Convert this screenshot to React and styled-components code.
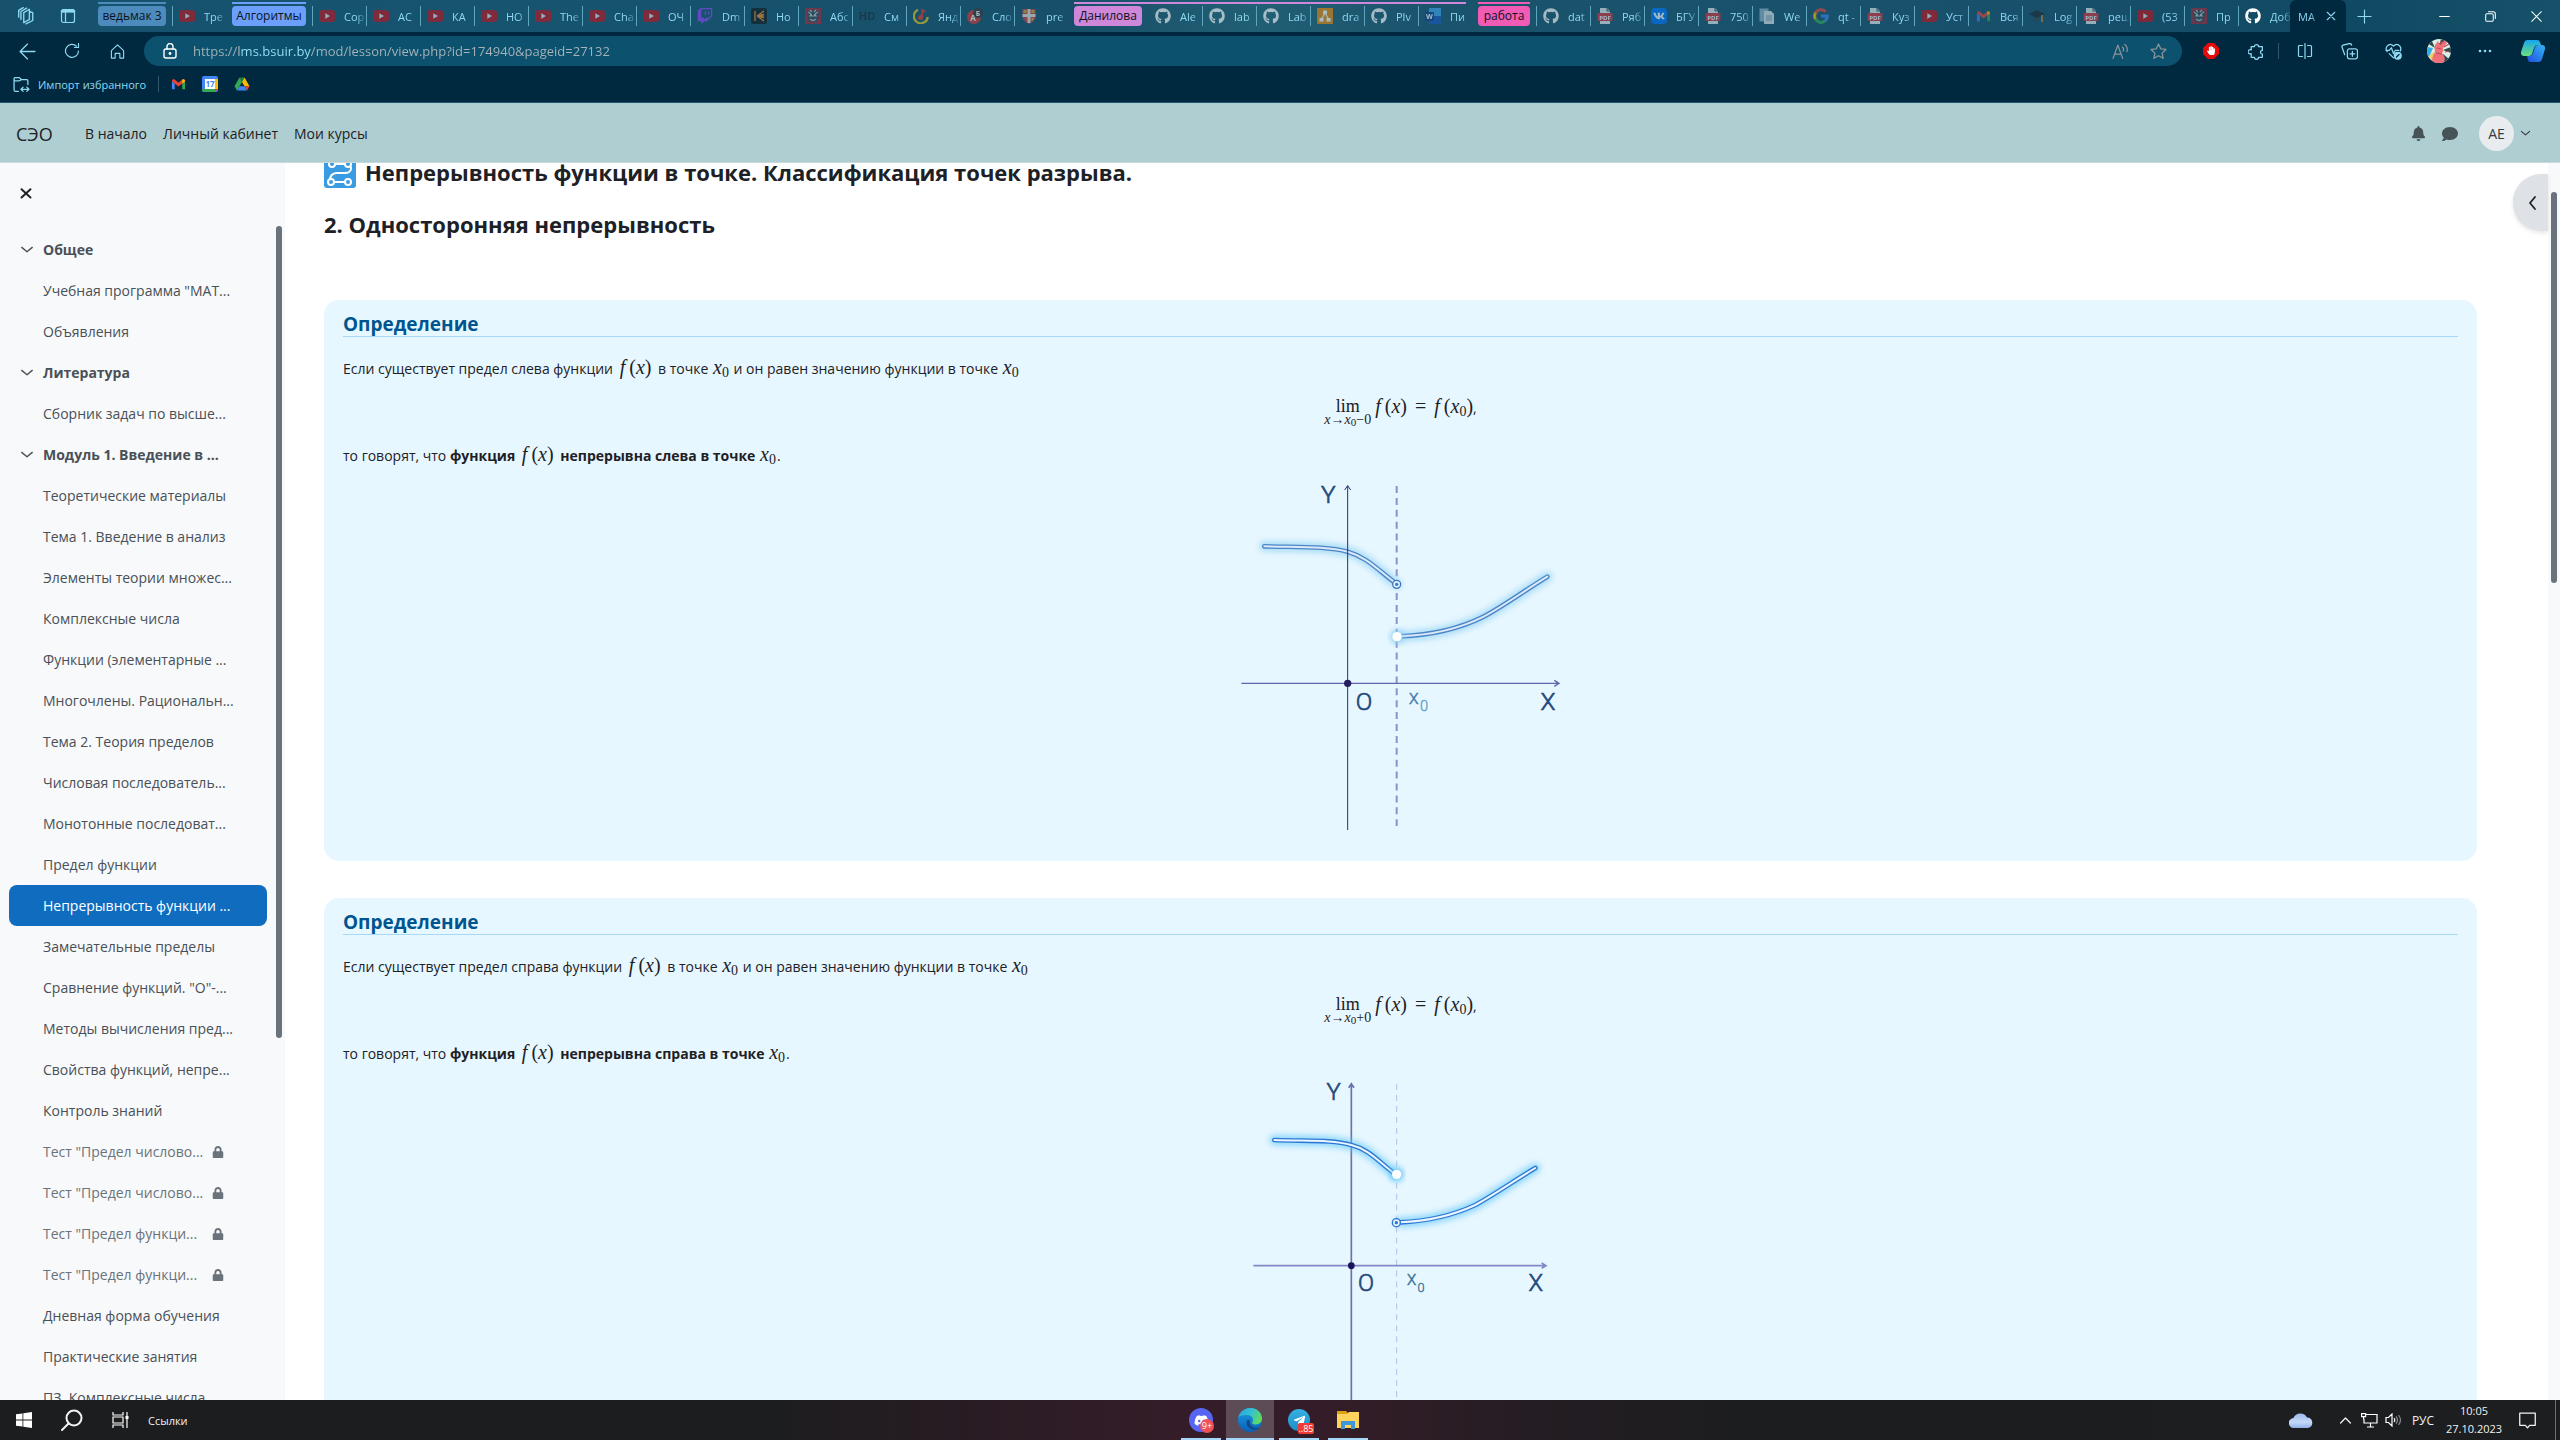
import React from "react";
import styled, { createGlobalStyle, css } from "styled-components";
import {
  FaGithub,
  FaTwitch,
  FaDiscord,
  FaTelegramPlane,
  FaBell,
  FaComment,
  FaLock,
  FaVk,
  FaHandPaper,
} from "react-icons/fa";

const ui = `"Open Sans", "Noto Sans", sans-serif`;
const math = `"Liberation Serif", serif`;
const ice = "#8fd9f2";

const Global = createGlobalStyle`
  * { box-sizing: border-box; }
  html, body { margin: 0; height: 100%; }
  body { font-family: ${ui}; font-size: 14px; color: #1d2125; background: #fff; overflow: hidden; }
  button { font: inherit; color: inherit; background: none; border: 0; padding: 0; margin: 0; }
  a { color: inherit; text-decoration: none; }
  ul { list-style: none; margin: 0; padding: 0; }
  h1, h2, h3, p { margin: 0; }
  svg { display: block; flex: none; }
`;

const Screen = styled.div`
  display: flex;
  flex-direction: column;
  height: 100vh;
`;

/* ---------- browser chrome ---------- */

const TabStrip = styled.div`
  display: flex;
  height: 32px;
  flex: none;
  color: ${ice};
  background: linear-gradient(90deg, #17526d 0%, #16546f 20%, #174f69 42%, #215f74 49%, #1a536c 56%, #18506b 80%, #104962 92%, #15526a 100%);
  font-size: 12px;
`;

const StripTools = styled.div`
  display: flex;
  align-items: center;
  width: 92px;
  padding-left: 16px;
  gap: 22px;
`;

const IconButton = styled.button`
  display: flex;
  align-items: center;
  justify-content: center;
  flex: none;
  width: ${(p) => p.$w || 20}px;
  height: ${(p) => p.$h || 24}px;
  color: ${(p) => p.$color || ice};
`;

const Group = styled.div`
  position: relative;
  display: flex;
  &::before {
    content: "";
    position: absolute;
    top: 2px;
    left: 6px;
    right: 6px;
    height: 2px;
    background: ${(p) => p.$color};
  }
`;

const GroupLabel = styled.button`
  width: ${(p) => p.$w}px;
  height: 20px;
  margin: 6px 6px 0;
  border-radius: 4px;
  background: ${(p) => p.$color};
  color: #0a1420;
  line-height: 20px;
  text-align: center;
`;

const Tab = styled.button`
  display: flex;
  align-items: center;
  width: 54px;
  flex: none;
  height: 32px;
  gap: 9px;
  padding-left: 7px;
  background: linear-gradient(#5fa6bd, #5fa6bd) left 6px / ${(p) => (p.$first ? 0 : 1)}px 20px no-repeat;
`;

const Favicon = styled.span`
  display: flex;
  align-items: center;
  justify-content: center;
  width: 16px;
  height: 16px;
  flex: none;
  opacity: ${(p) => (p.$bright ? 1 : 0.6)};
`;

const TabText = styled.span`
  width: 22px;
  white-space: nowrap;
  font-size: 11px;
  text-align: left;
  mask-image: linear-gradient(90deg, #000 55%, transparent);
`;

const ActiveTab = styled.div`
  display: flex;
  align-items: center;
  width: 56px;
  margin-left: -2px;
  padding: 0 10px 0 8px;
  justify-content: space-between;
  background: #00293f;
  border-radius: 6px 6px 0 0;
`;

const WindowButtons = styled.div`
  display: flex;
  flex: 1;
  align-items: center;
  justify-content: flex-end;
  padding: 0 14px 0 8px;
  gap: 26px;
`;

const Grow = styled.div`
  flex: 1;
`;

const Toolbar = styled.div`
  display: flex;
  align-items: center;
  height: 38px;
  flex: none;
  padding: 0 9px 0 17px;
  background: #00293f;
`;

const ToolGroup = styled.div`
  display: flex;
  align-items: center;
  width: 127px;
  gap: 25px;
`;

const AddressBar = styled.form`
  display: flex;
  flex: 1;
  align-items: center;
  height: 30px;
  padding: 0 14px 0 17px;
  gap: 14px;
  border-radius: 15px;
  background: #0c526f;
`;

const Url = styled.input`
  flex: 1;
  height: 30px;
  padding: 0;
  border: 0;
  outline: 0;
  font: 13px ${ui};
  color: transparent;
  background: linear-gradient(90deg, #a9b4b9 46px, #9be3f8 46px, #9be3f8 118px, #a9b4b9 118px);
  background-clip: text;
  -webkit-background-clip: text;
`;

const Extensions = styled.div`
  display: flex;
  align-items: center;
  padding-left: ${(p) => (p.$near ? 19 : 16)}px;
  gap: ${(p) => (p.$near ? 13 : 20)}px;
`;

const Divider = styled.span`
  width: 1px;
  height: 16px;
  background: #33576a;
`;

const Bookmarks = styled.div`
  display: flex;
  align-items: center;
  height: 33px;
  flex: none;
  padding: 0 13px 4px;
  gap: 12px;
  color: ${ice};
  background: #00293f;
  border-bottom: 1px solid #22566d;
  font-size: 11px;
`;

const Bookmark = styled.a`
  display: flex;
  align-items: center;
  gap: 8px;
  padding-right: ${(p) => p.$pad || 0}px;
`;

const Avatar = styled.span`
  display: block;
  width: 24px;
  height: 24px;
  border-radius: 50%;
  overflow: hidden;
`;

/* ---------- site header ---------- */

const SiteHeader = styled.header`
  display: flex;
  align-items: center;
  height: 60px;
  flex: none;
  padding: 2px 29px 0 16px;
  background: #aeced2;
  border-bottom: 1px solid #c8dadd;
`;

const Brand = styled.a`
  width: 69px;
  font-size: 18px;
`;

const SiteNav = styled.nav`
  display: flex;
  flex: 1;
  gap: 16px;
`;

const UserTools = styled.div`
  display: flex;
  align-items: center;
  color: #475457;
  gap: 16px;
`;

const Initials = styled.button`
  display: flex;
  align-items: center;
  gap: 6px;
  margin-left: 5px;
  color: #343a40;
  span {
    display: flex;
    align-items: center;
    justify-content: center;
    width: 35px;
    height: 35px;
    border-radius: 50%;
    background: #e9ecef;
  }
`;

/* ---------- page ---------- */

const Page = styled.div`
  position: relative;
  display: flex;
  flex: 1;
  min-height: 0;
  overflow: hidden;
`;

const Sidebar = styled.aside`
  display: flex;
  flex-direction: column;
  width: 285px;
  flex: none;
  background: #f8f9fa;
`;

const SidebarHead = styled.div`
  height: 63px;
  flex: none;
  padding: 23px 16px 0;
`;

const SidebarBody = styled.div`
  display: flex;
  flex: 1;
  min-height: 0;
  overflow: hidden;
`;

const Index = styled.ul`
  width: 258px;
  margin: 3px 9px 0;
  flex: none;
`;

const Row = styled.li`
  display: flex;
  align-items: center;
  height: 41px;
  border-radius: 8px;
  white-space: nowrap;
  color: #495057;
  ${(p) => p.$kind === "section" && css`font-weight: 700;`}
  ${(p) => p.$kind === "locked" && css`color: #6a737b;`}
  ${(p) => p.$kind === "active" && css`color: #fff; background: #0f6cbf;`}
`;

const RowSlot = styled.span`
  width: 34px;
  padding-left: 11px;
  flex: none;
`;

const RowLink = styled.a`
  width: ${(p) => (p.$short ? "169px" : "auto")};
`;

const Thumb = styled.span`
  width: 6px;
  height: ${(p) => p.$h};
  border-radius: 3px;
  background: #6a737b;
`;

const Main = styled.main`
  flex: 1;
  min-width: 0;
  padding: 0 71px 0 39px;
`;

const PageTitle = styled.h1`
  display: flex;
  align-items: center;
  gap: 9px;
  margin-top: -7px;
  font-size: 22px;
  line-height: 32px;
`;

const Subtitle = styled.h2`
  margin: 20px 0 60px;
  font-size: 22px;
  line-height: 32px;
`;

const Card = styled.section`
  margin-bottom: 37px;
  padding: 11px 19px 27px;
  border-radius: 15px;
  background: #e7f7ff;
`;

const CardTitle = styled.h3`
  height: 26px;
  margin-bottom: 20px;
  border-bottom: 1px solid #a6d8f8;
  color: #00548f;
  font-size: 19px;
  line-height: 26px;
`;

const Text = styled.p`
  height: 22px;
  line-height: 22px;
  white-space: nowrap;
`;

const Formula = styled.div`
  display: flex;
  justify-content: center;
  height: 65px;
  padding-top: 15px;
  line-height: 24px;
`;

const Limit = styled.span`
  display: flex;
  flex-direction: column;
  align-items: center;
  margin-right: 4px;
  font-family: ${math};
  font-size: 18px;
  small {
    font-size: 14px;
    line-height: 12px;
    margin-top: -4px;
    white-space: nowrap;
  }
  sub {
    font-size: 11px;
    line-height: 8px;
    vertical-align: -2px;
  }
`;

const Fn = styled.span`
  margin: 0 ${(p) => p.$gap || 0}px;
  font-family: ${math};
  font-size: 20px;
  line-height: 20px;
  font-weight: 400;
  white-space: nowrap;
  sub {
    font-size: 14px;
    line-height: 10px;
    vertical-align: -3px;
  }
`;

const F = styled.i`
  margin-right: 4px;
`;

const Equals = styled.span`
  margin: 0 8px;
  font-family: ${math};
  font-size: 20px;
`;

const Chart = styled.svg`
  width: 400px;
  height: 354px;
  margin: 14px auto 0;
`;

const PageScroll = styled.div`
  display: flex;
  justify-content: center;
  width: 12px;
  flex: none;
  padding-top: 29px;
  background: #f8f9fa;
`;

const DrawerToggle = styled.button`
  position: absolute;
  top: 11px;
  right: 12px;
  display: flex;
  align-items: center;
  justify-content: center;
  width: 35px;
  height: 57px;
  padding-left: 4px;
  border-radius: 28px 0 0 28px;
  background: #dee2e6;
  box-shadow: 0 2px 4px rgba(0, 0, 0, 0.1);
`;

/* ---------- taskbar ---------- */

const Taskbar = styled.footer`
  display: grid;
  grid-template-columns: 1fr auto 1fr;
  height: 40px;
  flex: none;
  color: #f2f2f2;
  font-size: 12px;
  background: linear-gradient(90deg, #1c1d1f 0%, #1c1d1f 30%, #2c1c25 40%, #341d28 46%, #341d28 52%, #241d23 60%, #1c1d1f 68%, #1c1e20 100%);
`;

const TaskLeft = styled.div`
  display: flex;
  align-items: center;
  a {
    margin-left: 4px;
    font-size: 11px;
  }
`;

const TaskApps = styled.div`
  display: flex;
  gap: 1px;
  margin-right: 11px;
`;

const TaskApp = styled.button`
  position: relative;
  display: flex;
  align-items: center;
  justify-content: center;
  width: 48px;
  height: 40px;
  background: ${(p) => (p.$active ? "#5d4b55" : "transparent")};
  &::after {
    content: "";
    position: absolute;
    bottom: 0;
    left: ${(p) => (p.$active ? 0 : 4)}px;
    right: ${(p) => (p.$active ? 0 : 4)}px;
    height: 2px;
    background: #a5d8f8;
  }
`;

const Badge = styled.span`
  position: absolute;
  left: 23px;
  top: ${(p) => (p.$round ? 19 : 23)}px;
  min-width: ${(p) => (p.$round ? 14 : 16)}px;
  height: ${(p) => (p.$round ? 14 : 11)}px;
  line-height: ${(p) => (p.$round ? 14 : 11)}px;
  border-radius: ${(p) => (p.$round ? 7 : 2)}px;
  background: ${(p) => (p.$round ? "#ee5256" : "#f03a35")};
  color: #fff;
  font-size: 9px;
  text-align: center;
`;

const Disc = styled.span`
  display: flex;
  align-items: center;
  justify-content: center;
  width: ${(p) => p.$size}px;
  height: ${(p) => p.$size}px;
  border-radius: 50%;
  color: #fff;
  background: ${(p) => p.$bg};
`;

const Tray = styled.div`
  display: flex;
  align-items: center;
  justify-content: flex-end;
`;

const TaskButton = styled.button`
  display: flex;
  align-items: center;
  justify-content: center;
  width: ${(p) => (p.$wide ? 48 : 24)}px;
  height: 40px;
  margin-right: ${(p) => p.$gap || 0}px;
`;

const Language = styled.button`
  width: 36px;
`;

const Clock = styled.time`
  display: block;
  width: 66px;
  margin-right: 8px;
  text-align: center;
  font-size: 11px;
  line-height: 18px;
`;

const ShowDesktop = styled.span`
  width: 1px;
  height: 40px;
  margin: 0 4px 0 16px;
  background: #6e6f71;
`;

/* ---------- icons ---------- */

function Line({ s = 16, w = 1.2, children, box = 16 }) {
  return (
    <svg width={s} height={s} viewBox={`0 0 ${box} ${box}`} fill="none" stroke="currentColor" strokeWidth={w} strokeLinecap="round" strokeLinejoin="round">
      {children}
    </svg>
  );
}

const Pdf = () => (
  <svg width="16" height="16" viewBox="0 0 16 16">
    <path d="M3 0h7l3 3v13H3z" fill="#e8eef0" />
    <path d="M10 0v3h3" fill="none" stroke="#33424a" />
    <rect x="0.500" y="5" width="15" height="8" rx="1" fill="#d8343a" />
    <text x="8" y="11.500" fontSize="6" fontWeight="700" fontFamily="Open Sans" fill="#fff" textAnchor="middle">PDF</text>
  </svg>
);

const YouTube = () => (
  <svg width="16" height="16" viewBox="0 0 16 16">
    <rect y="2" width="16" height="12" rx="3" fill="#c4121c" />
    <path d="M6.300 5.300v5.400L11 8z" fill="#e8e8e8" />
  </svg>
);

const Gmail = () => (
  <svg width="15" height="15" viewBox="0 0 16 16">
    <path d="M1 13V4.500l3 2.300V13z" fill="#4285f4" />
    <path d="M12 13V6.800l3-2.300V13z" fill="#34a853" />
    <path d="M1 4.500C1 2.600 3 2 4.200 3L8 6l3.800-3C13 2 15 2.600 15 4.500L8 10z" fill="#ea4335" />
    <path d="M12 2.900v4L15 4.700C15 2.600 13 2 12 2.900z" fill="#fbbc04" />
  </svg>
);

const Drive = () => (
  <svg width="16" height="16" viewBox="0 0 16 16">
    <path d="M5.500 1.500h5L8 6z" fill="#188038" />
    <path d="M5.500 1.500L0.500 10.300 3 14.500 8 6z" fill="#34a853" />
    <path d="M10.500 1.500l5 8.800h-5L8 6z" fill="#fbbc04" />
    <path d="M15.500 10.300L13 14.500 10.500 10.300z" fill="#ea4335" />
    <path d="M5.500 10.300h5l2.500 4.200H3z" fill="#4285f4" />
  </svg>
);

const Calendar = () => (
  <svg width="16" height="16" viewBox="0 0 16 16">
    <rect width="16" height="16" rx="2" fill="#4285f4" />
    <path d="M13 3H16v10h-3z" fill="#fbbc04" />
    <path d="M0 13h13V16H2a2 2 0 0 1-2-2z" fill="#34a853" />
    <path d="M13 13H16L13 16z" fill="#ea4335" />
    <rect x="3" y="3" width="10" height="10" fill="#fff" />
    <text x="8" y="11" fontSize="8" fontWeight="700" fontFamily="Open Sans" fill="#4285f4" textAnchor="middle">17</text>
  </svg>
);

const Ornament = () => (
  <svg width="16" height="16" viewBox="0 0 16 16">
    <rect width="16" height="16" fill="#a52a3c" />
    <path d="M2 5c2-4 10-4 12 0l-2 9H4z" fill="#3b4853" />
    <path d="M3 4l3 2M13 4l-3 2M4 8h8M5 11q3 3 6 0M5 2l2 2M11 2L9 4" stroke="#b7c4c8" strokeWidth="1.200" fill="none" />
    <circle cx="6" cy="7" r="1" fill="#e0e6e8" />
    <circle cx="10" cy="7" r="1" fill="#e0e6e8" />
  </svg>
);

const Hd = () => (
  <svg width="16" height="16" viewBox="0 0 16 16">
    <text x="8" y="12" fontSize="11" fontFamily="Open Sans" fontWeight="700" fill="#1c2c36" textAnchor="middle">HD</text>
  </svg>
);

const Rays = () => (
  <svg width="16" height="16" viewBox="0 0 16 16">
    <rect width="16" height="16" rx="2" fill="#151a1e" />
    <path d="M4 3v10M6 8l7-5M6 8l7-2M6 8h7M6 8l7 2M6 8l7 5" stroke="#f58a2a" strokeWidth="1.300" />
  </svg>
);

const Music = () => (
  <svg width="16" height="16" viewBox="0 0 16 16">
    <path d="M5 1.800A7 7 0 1 0 14.800 9" fill="none" stroke="#e8c81e" strokeWidth="2.200" />
    <circle cx="7.500" cy="9.500" r="2.500" fill="#e83a2a" />
    <path d="M9.300 9V2l3 2" fill="none" stroke="#e83a2a" strokeWidth="1.600" />
  </svg>
);

const Abc = () => (
  <svg width="16" height="16" viewBox="0 0 16 16">
    <circle cx="7" cy="9" r="7" fill="#d93a30" />
    <circle cx="11" cy="5" r="5" fill="#3b3538" />
    <text x="6" y="13" fontSize="8" fontWeight="700" fontFamily="Open Sans" fill="#fff" textAnchor="middle">A</text>
    <text x="11" y="8" fontSize="7" fontWeight="700" fontFamily="Open Sans" fill="#fff" textAnchor="middle">Б</text>
  </svg>
);

const Shield = () => (
  <svg width="16" height="16" viewBox="0 0 16 16">
    <path d="M1.500 1h13v8q-1 5-6.500 7Q2.500 14 1.500 9z" fill="#c8434a" />
    <path d="M6.500 1h3v14h-3zM1.500 6h13v3h-13z" fill="#f0e6d8" />
    <path d="M2.500 2h3v3h-3zM10.500 10h3l-2 3h-1zM10.500 2h3v3h-3z" fill="#d9a92c" />
  </svg>
);

const Diagram = () => (
  <svg width="16" height="16" viewBox="0 0 16 16">
    <rect width="16" height="16" rx="1" fill="#f08705" />
    <path d="M8 5L4.500 11M8 5l3.500 6" stroke="#fff" strokeWidth="1.200" />
    <path d="M6 2.500h4v3.500H6zM2.500 10h4v3.500h-4zM9.500 10h4v3.500h-4z" fill="#fff" />
  </svg>
);

const Word = () => (
  <svg width="16" height="16" viewBox="0 0 16 16">
    <rect x="4" y="0" width="12" height="16" rx="1" fill="#41a5ee" />
    <rect x="4" y="8" width="12" height="8" rx="1" fill="#185abd" />
    <rect x="0" y="4" width="9" height="9" rx="1" fill="#103f91" />
    <text x="4.500" y="11" fontSize="7" fontWeight="700" fontFamily="Open Sans" fill="#fff" textAnchor="middle">W</text>
  </svg>
);

const Vk = () => (
  <svg width="16" height="16" viewBox="0 0 16 16">
    <rect width="16" height="16" rx="4" fill="#0077ff" />
    <FaVk x="2" y="2" size={12} color="#fff" />
  </svg>
);

const Papers = () => (
  <svg width="16" height="16" viewBox="0 0 16 16">
    <path d="M0.500 0.500h9v13h-9z" fill="#8fb4c8" />
    <path d="M5 3h7l3 3v10H5z" fill="#dfe8ec" />
    <path d="M7 8h6M7 10h6M7 12h6" stroke="#7a9eb2" />
  </svg>
);

const Google = () => (
  <svg width="16" height="16" viewBox="0 0 16 16" fill="none" strokeWidth="3">
    <path d="M12.800 3.800A6.300 6.300 0 0 0 2.500 5" stroke="#ea4335" />
    <path d="M2.600 4.700a6.300 6.300 0 0 0 0 6.600" stroke="#fbbc05" />
    <path d="M2.500 11a6.300 6.300 0 0 0 9.500 2" stroke="#34a853" />
    <path d="M11.800 13A6.300 6.300 0 0 0 14.300 8H8" stroke="#4285f4" />
  </svg>
);

const Cap = () => (
  <svg width="16" height="16" viewBox="0 0 16 16">
    <path d="M0 6l8-4 8 4-8 4z" fill="#1d2b33" />
    <path d="M4 9v3q4 2.500 8 0V9l-4 2z" fill="#31434c" />
    <path d="M13 7v7" stroke="#e0952f" strokeWidth="1.500" />
  </svg>
);

const favicons = {
  yt: YouTube,
  tw: () => <FaTwitch size={16} color="#9146ff" />,
  rays: Rays,
  orn: Ornament,
  hd: Hd,
  music: Music,
  abc: Abc,
  shield: Shield,
  gh: () => <FaGithub size={16} color="#fff" />,
  draw: Diagram,
  word: Word,
  pdf: Pdf,
  vk: Vk,
  doc: Papers,
  google: Google,
  gmail: Gmail,
  cap: Cap,
};

const Chevron = ({ s = 14 }) => (
  <Line s={s} w={1.6}><path d="M2 5l6 5 6-5" /></Line>
);

const EdgeLogo = () => (
  <svg width="24" height="24" viewBox="0 0 24 24">
    <defs>
      <linearGradient id="edgeTop" x1="0" x2="1" y1="0.200" y2="0.600">
        <stop offset="0" stopColor="#2aa5e0" />
        <stop offset="0.500" stopColor="#35c1d0" />
        <stop offset="1" stopColor="#62dc5a" />
      </linearGradient>
      <linearGradient id="edgeLow" x1="0" x2="0" y1="0" y2="1">
        <stop offset="0" stopColor="#1a9fe0" />
        <stop offset="1" stopColor="#0b5fb8" />
      </linearGradient>
    </defs>
    <circle cx="12" cy="12" r="12" fill="url(#edgeLow)" />
    <path d="M0.300 9.500C2 3.500 7 0 12.500 0 19 0 24 5 24 10.300c0 4-3 6.200-6 6.200-2.500 0-4-0.800-4-1.800 0-0.700 1-1 1-2.900C15 9 12 7 8.500 7 4.500 7 1.300 8.300 0.300 9.500z" fill="url(#edgeTop)" />
    <path d="M8.500 14c0 5 4.500 8.500 10 7.700 1.500-0.300 3-1.200 4-2.700-2 1-4.500 1.200-6.500 0.500-3-1-4.500-3.500-4.300-6C12 11.500 9 10.500 8.500 14z" fill="#114a8b" />
  </svg>
);

const Copilot = () => (
  <svg width="24" height="22" viewBox="0 0 24 22">
    <defs>
      <linearGradient id="copA" x1="0" x2="0" y1="0" y2="1">
        <stop offset="0" stopColor="#16a5f2" />
        <stop offset="1" stopColor="#6ee07a" />
      </linearGradient>
      <linearGradient id="copB" x1="0" x2="1" y1="1" y2="0">
        <stop offset="0" stopColor="#1f4fe0" />
        <stop offset="1" stopColor="#35b4f5" />
      </linearGradient>
    </defs>
    <path d="M6 0h10q2.500 0 3 2l1 3h-4q-2 0-3 3l-2 6q-1 2-3 2H3q-3.500 0-3-4L3 3Q4 0 6 0z" fill="url(#copA)" />
    <path d="M18 22H9q-1.500 0-2-2l-1-4h3q2 0 3-3l2-6q1-2 3-2h4q3.500 0 3 4l-3 10q-1 3-3 3z" fill="url(#copB)" />
  </svg>
);

const FolderIcon = () => (
  <svg width="22" height="18" viewBox="0 0 22 18">
    <path d="M0 0h9l2 2v3H0z" fill="#e0a010" />
    <path d="M0 3h10l2-2h10v16H0z" fill="#ffd35c" />
    <path d="M4 18v-8h14v8h-4v-4H8v4z" fill="#3f97d8" />
  </svg>
);

const CloudIcon = () => (
  <svg width="24" height="16" viewBox="0 0 24 16">
    <defs>
      <linearGradient id="cloud" x1="0" x2="0" y1="0" y2="1">
        <stop offset="0" stopColor="#9db8ee" />
        <stop offset="0.600" stopColor="#c5daf8" />
        <stop offset="1" stopColor="#8fb0ea" />
      </linearGradient>
    </defs>
    <path d="M5 16a5 5 0 0 1-0.500-10A7.500 7.500 0 0 1 18 5.500a5.300 5.300 0 0 1 1 10.500z" fill="url(#cloud)" />
  </svg>
);

/* ---------- data ---------- */

const groupA = [
  ["yt", "Сор"], ["yt", "АС"], ["yt", "КА"], ["yt", "НО"], ["yt", "The"], ["yt", "Cha"], ["yt", "ОЧ"],
  ["tw", "Dm"], ["rays", "Но"], ["orn", "Абс"], ["hd", "См"], ["music", "Янд"], ["abc", "Сло"], ["shield", "pre"],
];
const groupB = [["gh", "Ale"], ["gh", "lab"], ["gh", "Lab"], ["draw", "dra"], ["gh", "Plv"], ["word", "Пи"]];
const groupC = [
  ["gh", "dat"], ["pdf", "Ряб"], ["vk", "БГУ"], ["pdf", "750"], ["doc", "We"], ["google", "qt -"], ["pdf", "Куз"],
  ["yt", "Уст"], ["gmail", "Вся"], ["cap", "Log"], ["pdf", "реш"], ["yt", "(53"], ["orn", "Пр"], ["gh", "Доб", true],
];

const index = [
  ["section", "Общее"],
  ["item", 'Учебная программа "МАТ...'],
  ["item", "Объявления"],
  ["section", "Литература"],
  ["item", "Сборник задач по высше..."],
  ["section", "Модуль 1. Введение в ..."],
  ["item", "Теоретические материалы"],
  ["item", "Тема 1. Введение в анализ"],
  ["item", "Элементы теории множес..."],
  ["item", "Комплексные числа"],
  ["item", "Функции (элементарные ..."],
  ["item", "Многочлены. Рациональн..."],
  ["item", "Тема 2. Теория пределов"],
  ["item", "Числовая последователь..."],
  ["item", "Монотонные последоват..."],
  ["item", "Предел функции"],
  ["active", "Непрерывность функции ..."],
  ["item", "Замечательные пределы"],
  ["item", 'Сравнение функций. "О"-...'],
  ["item", "Методы вычисления пред..."],
  ["item", "Свойства функций, непре..."],
  ["item", "Контроль знаний"],
  ["locked", 'Тест "Предел числово...'],
  ["locked", 'Тест "Предел числово...'],
  ["locked", 'Тест "Предел функци...'],
  ["locked", 'Тест "Предел функци...'],
  ["item", "Дневная форма обучения"],
  ["item", "Практические занятия"],
  ["item", "ПЗ. Комплексные числа"],
];

/* ---------- pieces ---------- */

const BrowserTab = ({ icon, text, bright, first }) => {
  const Icon = favicons[icon];
  return (
    <Tab $first={first}>
      <Favicon $bright={bright}><Icon /></Favicon>
      <TabText>{text}</TabText>
    </Tab>
  );
};

const Fx = ({ gap }) => (
  <Fn $gap={gap}><F>f</F>(<i>x</i>)</Fn>
);

const X0 = () => (
  <Fn $gap={1}><i>x</i><sub>0</sub></Fn>
);

function Glow({ id, d, stroke, glow, core }) {
  return (
    <g fill="none" strokeLinecap="round">
      <path d={d} stroke={glow} strokeWidth="30" filter={`url(#${id})`} opacity="0.700" />
      <path d={d} stroke={stroke} strokeWidth="14" />
      <path d={d} stroke={core} strokeWidth="6" />
    </g>
  );
}

function ClosedPoint({ x, y, color }) {
  return (
    <g>
      <circle cx={x} cy={y} r="12" fill="#e3f1fd" stroke={color} strokeWidth="4" />
      <circle cx={x} cy={y} r="5" fill={color} />
    </g>
  );
}

function OpenPoint({ x, y, glow, id }) {
  return (
    <g>
      <circle cx={x} cy={y} r="20" fill={glow} filter={`url(#${id})`} />
      <circle cx={x} cy={y} r="14" fill="#fff" />
    </g>
  );
}

function LeftChart() {
  const c = "#4b86c8";
  const g = "#8fd0f2";
  return (
    <Chart viewBox="2 300 1200 1062" fontFamily="Roboto, sans-serif" fontWeight="300">
      <defs>
        <filter id="blurL" x="-20%" y="-60%" width="140%" height="220%"><feGaussianBlur stdDeviation="9" /></filter>
      </defs>
      <path d="M589 318V1338" stroke="#8f8fcb" strokeWidth="6" strokeDasharray="21 14.700" />
      <Glow id="blurL" d="M192 499C290 502 380 498 442 515 500 531 535 572 589 612" stroke={c} glow={g} core="#dbe8f8" />
      <Glow id="blurL" d="M600 769C680 766 770 750 850 710 915 675 975 630 1041 590" stroke={c} glow={g} core="#dbe8f8" />
      <path d="M123 910H1076M1062 901l14 9-14 9" stroke="#6264ae" strokeWidth="4" fill="none" />
      <path d="M442 1350V317M433 330l9-13 9 13" stroke="#2b2f78" strokeWidth="3" fill="none" />
      <circle cx="442" cy="910" r="11" fill="#221f5c" />
      <ClosedPoint x="589" y="613" color="#3a78c0" />
      <OpenPoint x="590" y="770" glow={g} id="blurL" />
      <g fontSize="73" fill="#1f497d" stroke="#1f497d" strokeWidth="2" textAnchor="middle">
        <text x="384" y="369">Y</text>
        <text x="491" y="991">O</text>
        <text x="1043" y="991">X</text>
      </g>
      <text x="640" y="971" fontSize="62" fill="#3678ad" stroke="#3678ad" textAnchor="middle">x</text>
      <text x="671" y="994" fontSize="44" fill="#5b9cc6" stroke="#5b9cc6" textAnchor="middle">0</text>
    </Chart>
  );
}

function RightChart() {
  const c = "#2b78d2";
  const g = "#64c8fa";
  return (
    <Chart viewBox="2 294 1200 1062" fontFamily="Roboto, sans-serif" fontWeight="300">
      <defs>
        <filter id="blurR" x="-20%" y="-60%" width="140%" height="220%"><feGaussianBlur stdDeviation="9" /></filter>
      </defs>
      <path d="M589 312V1338" stroke="#b4bfe6" strokeWidth="3" strokeDasharray="18 14.900" />
      <path d="M159 857H1037M1024 849l13 8-13 8" stroke="#8387c8" strokeWidth="5" fill="none" />
      <path d="M453 1350V311M445 323l8-12 8 12" stroke="#6c70ae" strokeWidth="5" fill="none" />
      <Glow id="blurR" d="M222 480C315 484 395 478 453 495 507 508 538 548 584 582" stroke={c} glow={g} core="#eaf5ff" />
      <Glow id="blurR" d="M598 727C675 724 750 710 825 675 885 642 940 603 1005 564" stroke={c} glow={g} core="#eaf5ff" />
      <circle cx="453" cy="857" r="10" fill="#1a1360" />
      <OpenPoint x="589" y="583" glow={g} id="blurR" />
      <ClosedPoint x="588" y="728" color="#2b78d2" />
      <g fontSize="71" fill="#1f497d" stroke="#1f497d" strokeWidth="2" textAnchor="middle">
        <text x="400" y="360">Y</text>
        <text x="497" y="932">O</text>
        <text x="1006" y="932">X</text>
      </g>
      <g fill="#2f7096" stroke="#2f7096" textAnchor="middle">
        <text x="634" y="914" fontSize="60">x</text>
        <text x="662" y="936" fontSize="38">0</text>
      </g>
    </Chart>
  );
}

function Definition({ side, sign, children }) {
  return (
    <Card>
      <CardTitle>Определение</CardTitle>
      <Text>Если существует предел {side} функции <Fx gap={3} /> в точке <X0 /> и он равен значению функции в точке <X0 /></Text>
      <Formula>
        <Limit>lim<small><i>x</i>→<i>x</i><sub>0</sub>{sign}0</small></Limit>
        <span><Fx /><Equals>=</Equals><Fn><F>f</F>(<i>x</i><sub>0</sub>)</Fn>,</span>
      </Formula>
      <Text>то говорят, что <b>функция <Fx gap={3} /> непрерывна {side} в точке</b> <X0 />.</Text>
      {children}
    </Card>
  );
}

export default function App() {
  return (
    <Screen>
      <Global />
      <TabStrip>
        <StripTools>
          <IconButton aria-label="Рабочие области">
            <Line s={18}><path d="M6 5l5-3v9l-5 3zM3.500 11V4l5-3M1.500 9V3l4-2.500M11 4l3 1v7l-6 3" /></Line>
          </IconButton>
          <IconButton aria-label="Вертикальные вкладки">
            <Line s={16}><rect x="1.500" y="1.500" width="13" height="13" rx="2" /><path d="M1.500 4h13M5.500 4v10" /><path d="M2 3h12" strokeWidth="2.500" /></Line>
          </IconButton>
        </StripTools>
        <Group $color="#4e8bbd">
          <GroupLabel $w={68} $color="#4e8bbd">ведьмак 3</GroupLabel>
        </Group>
        <BrowserTab icon="yt" text="Тре" />
        <Group $color="#6c9ffc">
          <GroupLabel $w={74} $color="#6c9ffc">Алгоритмы</GroupLabel>
        </Group>
        {groupA.map(([icon, text], i) => <BrowserTab key={i} icon={icon} text={text} />)}
        <Group $color="#cf87da">
          <GroupLabel $w={68} $color="#cf87da">Данилова</GroupLabel>
          {groupB.map(([icon, text], i) => <BrowserTab key={i} icon={icon} text={text} first={i === 0} />)}
        </Group>
        <Group $color="#f05cb5">
          <GroupLabel $w={52} $color="#f05cb5">работа</GroupLabel>
        </Group>
        {groupC.map(([icon, text, bright], i) => <BrowserTab key={i} icon={icon} text={text} bright={bright} />)}
        <ActiveTab>
          <TabText>МА</TabText>
          <IconButton $w={10} aria-label="Закрыть вкладку"><Line s={10}><path d="M2 2l12 12M14 2L2 14" strokeWidth="1.800" /></Line></IconButton>
        </ActiveTab>
        <WindowButtons>
          <IconButton aria-label="Новая вкладка"><Line s={15}><path d="M8 1v14M1 8h14" /></Line></IconButton>
          <Grow />
          <IconButton $color="#fff" aria-label="Свернуть"><Line s={11}><path d="M1 8h14" strokeWidth="1.600" /></Line></IconButton>
          <IconButton $color="#fff" aria-label="Развернуть"><Line s={11} w={1.5}><rect x="1" y="4" width="11" height="11" rx="2" /><path d="M5 1h7q3 0 3 3v7" /></Line></IconButton>
          <IconButton $color="#fff" aria-label="Закрыть"><Line s={11} w={1.5}><path d="M1 1l14 14M15 1L1 15" /></Line></IconButton>
        </WindowButtons>
      </TabStrip>

      <Toolbar>
        <ToolGroup>
          <IconButton aria-label="Назад"><Line s={17}><path d="M15 8H1M8 1L1 8l7 7" /></Line></IconButton>
          <IconButton aria-label="Обновить"><Line s={16}><path d="M14.500 8A6.500 6.500 0 1 1 12.500 3.200M14.500 0.500v4h-4" /></Line></IconButton>
          <IconButton aria-label="Домой"><Line s={15}><path d="M1.500 7L8 1l6.500 6v8h-4v-5h-5v5h-4z" /></Line></IconButton>
        </ToolGroup>
        <AddressBar>
          <IconButton $w={18} $color="#fff" type="button" aria-label="Сведения о сайте">
            <Line s={16} w={1.4}><rect x="2" y="6" width="12" height="9" rx="2" /><path d="M5 6V3.500a3 3 0 0 1 6 0V6" /><circle cx="8" cy="10.500" r="0.700" /></Line>
          </IconButton>
          <Url aria-label="Адрес" defaultValue="https://lms.bsuir.by/mod/lesson/view.php?id=174940&pageid=27132" />
          <IconButton type="button" $color="#8d9598" $w={28} aria-label="Прочесть вслух"><Line s={17}><path d="M1 14.500L5.500 2 10 14.500M2.500 10.500h6M10 4q1.500 1.500 0.500 3.500M12 1.500q3.500 2.500 2 6.500" /></Line></IconButton>
          <IconButton type="button" $color="#8d9598" aria-label="В избранное"><Line s={17}><path d="M8 1l2.100 4.500 4.900 0.600-3.600 3.400 0.900 4.900L8 12l-4.300 2.400 0.900-4.900L1 6.100l4.900-0.600z" /></Line></IconButton>
        </AddressBar>
        <Extensions $near>
          <IconButton aria-label="Блокировщик">
            <svg width="16" height="16" viewBox="0 0 16 16"><path d="M5 0h6l5 5v6l-5 5H5l-5-5V5z" fill="#e60b0b" /><FaHandPaper x="3.500" y="3" size={9} color="#fff" /></svg>
          </IconButton>
          <IconButton $w={44} aria-label="Расширения"><Line s={17}><path d="M3 3.500h3a2 2 0 1 1 4 0h3.500v3.500a1.600 1.600 0 1 0 0 3.500v3H10a2 2 0 1 1-4 0H3v-3.500a2 2 0 1 1 0-3.500z" /></Line></IconButton>
        </Extensions>
        <Divider />
        <Extensions>
          <IconButton aria-label="Разделить экран"><Line s={16}><path d="M8 0.500v15M5.500 2.500H2.500q-1 0-1 1v9q0 1 1 1h3M10.500 2.500h3q1 0 1 1v9q0 1-1 1h-3" /></Line></IconButton>
          <IconButton $w={28} aria-label="Коллекции"><Line s={17}><rect x="6" y="5.500" width="9.500" height="9.500" rx="2" /><path d="M10.700 8v4.500M8.500 10.200H13M3.500 11L1 4q-0.500-1.500 1-2l6-1.500q1.500-0.300 2 1.500" /></Line></IconButton>
          <IconButton aria-label="Производительность"><Line s={17}><path d="M8 3q-3-3.500-6 0-2 3 0 5M8 3q3-3.500 6 0 1.500 2 0.500 4.500M1 7h3l2-2.500L8 10l1.500-3H13M4 10l4 4" /><circle cx="12" cy="12" r="3.200" fill="currentColor" /><path d="M10.800 13.200l2.400-2.400" stroke="#00293f" /></Line></IconButton>
          <IconButton $w={32} aria-label="Профиль">
            <Avatar>
              <svg width="24" height="24" viewBox="0 0 24 24">
                <rect width="24" height="24" fill="#d9efe6" />
                <path d="M0 4l8 5L4 0zM14 0l-2 8 8-6zM24 8l-8 3 8 3zM22 20l-6-5v9z" fill="#2c4a48" />
                <path d="M0 8l6 1-3 7-3 2z" fill="#35aee0" />
                <path d="M2 17l5-4 2 6-4 3z" fill="#f0cf58" />
                <path d="M5 24q0-7 3-11-1-4 0-7l3-4 2 4 5-5 2 3-4 5q1 3-1 5 4 4 2 10z" fill="#f0707a" />
                <path d="M12 5l5-3M10 9l4 1M9 14l6 1M18 13l4-1M17 8l5-3" stroke="#b84a58" strokeWidth="1.200" fill="none" />
              </svg>
            </Avatar>
          </IconButton>
          <IconButton aria-label="Меню"><svg width="14" height="4" viewBox="0 0 14 4" fill="currentColor"><circle cx="2" cy="2" r="1.300" /><circle cx="7" cy="2" r="1.300" /><circle cx="12" cy="2" r="1.300" /></svg></IconButton>
          <IconButton $w={36} aria-label="Copilot"><Copilot /></IconButton>
        </Extensions>
      </Toolbar>

      <Bookmarks>
        <Bookmark href="#">
          <Line s={17}><path d="M1 13V2.500q0-1 1-1h4l2 2h5q1 0 1 1V8M1 4.500h5l2-1M1 13q0 1.500 1.500 1.500H5M8 12.500h7M9.500 10.500l-2 2 2 2M13 10.500l2 2-2 2" /></Line>
          Импорт избранного
        </Bookmark>
        <Divider />
        <Bookmark href="#" $pad={4} aria-label="Gmail"><Gmail /></Bookmark>
        <Bookmark href="#" $pad={4} aria-label="Календарь"><Calendar /></Bookmark>
        <Bookmark href="#" aria-label="Диск"><Drive /></Bookmark>
      </Bookmarks>

      <SiteHeader>
        <Brand href="#">СЭО</Brand>
        <SiteNav>
          <a href="#">В начало</a>
          <a href="#">Личный кабинет</a>
          <a href="#">Мои курсы</a>
        </SiteNav>
        <UserTools>
          <IconButton $w={16} $color="#475457" aria-label="Уведомления"><FaBell size={15} /></IconButton>
          <IconButton $w={16} $color="#475457" aria-label="Сообщения"><FaComment size={16} /></IconButton>
          <Initials><span>АЕ</span><Chevron s={11} /></Initials>
        </UserTools>
      </SiteHeader>

      <Page>
        <Sidebar>
          <SidebarHead>
            <IconButton $h={14} $color="#1d2125" aria-label="Закрыть"><Line s={12} w={2.6}><path d="M2 3l12 11M14 3L2 14" /></Line></IconButton>
          </SidebarHead>
          <SidebarBody>
            <Index>
              {index.map(([kind, label], i) => (
                <Row key={i} $kind={kind}>
                  <RowSlot>{kind === "section" && <Chevron />}</RowSlot>
                  <RowLink href="#" $short={kind === "locked"}>{label}</RowLink>
                  {kind === "locked" && <FaLock size={12} />}
                </Row>
              ))}
            </Index>
            <Thumb $h="812px" />
          </SidebarBody>
        </Sidebar>

        <Main>
          <PageTitle>
            <svg width="32" height="32" viewBox="0 0 32 32">
              <rect width="32" height="32" rx="3" fill="#399be2" />
              <g fill="none" stroke="#fff" strokeWidth="2">
                <path d="M10 8h11q7 1 6 5-1 4-6 4H12q-6 1-6 7M9 26h12" />
                <circle cx="8" cy="8" r="3" fill="#399be2" />
                <circle cx="24" cy="8" r="3" fill="#399be2" />
                <circle cx="7" cy="26" r="3" fill="#399be2" />
                <circle cx="24" cy="26" r="3" fill="#399be2" />
              </g>
            </svg>
            Непрерывность функции в точке. Классификация точек разрыва.
          </PageTitle>
          <Subtitle>2. Односторонняя непрерывность</Subtitle>
          <Definition side="слева" sign="−"><LeftChart /></Definition>
          <Definition side="справа" sign="+"><RightChart /></Definition>
        </Main>
        <PageScroll><Thumb $h="391px" /></PageScroll>
        <DrawerToggle aria-label="Открыть панель блоков"><Line s={16} w={1.8}><path d="M10 2L5 8l5 6" /></Line></DrawerToggle>
      </Page>

      <Taskbar>
        <TaskLeft>
          <TaskButton $wide aria-label="Пуск">
            <svg width="16" height="16" viewBox="0 0 16 16" fill="#fff"><path d="M0 2.300l6.500-0.900v6.200H0zM7.300 1.300L16 0v7.600H7.300zM0 8.400h6.500v6.200L0 13.700zM7.300 8.400H16V16l-8.700-1.200z" /></svg>
          </TaskButton>
          <TaskButton $wide aria-label="Поиск">
            <Line s={22} w={2} box={22}><circle cx="13" cy="9" r="7.500" /><path d="M7.500 14.500L1 21" /></Line>
          </TaskButton>
          <TaskButton $wide aria-label="Представление задач">
            <svg width="17" height="16" viewBox="0 0 17 16" fill="none" stroke="#fff" strokeWidth="1.200"><path d="M1 0v3h10V0M1 16v-3h10v3M1 5h10v6H1zM15 0v16" /><path d="M13.500 4h3v3h-3z" fill="#fff" stroke="none" /></svg>
          </TaskButton>
          <a href="#">Ссылки</a>
        </TaskLeft>
        <TaskApps>
          <TaskApp aria-label="Discord">
            <Disc $size={24} $bg="#5865f2"><FaDiscord size={15} /></Disc>
            <Badge $round>9+</Badge>
          </TaskApp>
          <TaskApp $active aria-label="Edge"><EdgeLogo /></TaskApp>
          <TaskApp aria-label="Telegram">
            <Disc $size={22} $bg="linear-gradient(#35b0e4, #1c8fc8)"><FaTelegramPlane size={13} /></Disc>
            <Badge>..85</Badge>
          </TaskApp>
          <TaskApp aria-label="Проводник"><FolderIcon /></TaskApp>
        </TaskApps>
        <Tray>
          <TaskButton $gap={20} aria-label="Погода"><CloudIcon /></TaskButton>
          <TaskButton aria-label="Скрытые значки"><Line s={13} w={1.6}><path d="M2 11l6-6 6 6" /></Line></TaskButton>
          <TaskButton aria-label="Сеть">
            <svg width="17" height="15" viewBox="0 0 17 15" fill="none" stroke="#fff" strokeWidth="1.200"><path d="M5 1.500h11v8.500H3V6M9.500 10v4M6 14h7M0.600 0.600h4v3h-4zM2.600 4v2.500" /></svg>
          </TaskButton>
          <TaskButton aria-label="Звук">
            <svg width="17" height="14" viewBox="0 0 17 14" fill="none" stroke="#fff" strokeWidth="1.200"><path d="M1 4.500h2.500L7 1v12L3.500 9.500H1zM9 5q1.500 2 0 4" /><path d="M11 3.500q3 3.500 0 7M13.500 2q4 5 0 10" stroke="#8a8b8c" /></svg>
          </TaskButton>
          <Language>РУС</Language>
          <Clock>10:05<br />27.10.2023</Clock>
          <TaskButton aria-label="Уведомления"><Line s={17} w={1.2}><path d="M0.700 1h14.600v11.500H10L8 15l-2-2.500H0.700z" /></Line></TaskButton>
          <ShowDesktop />
        </Tray>
      </Taskbar>
    </Screen>
  );
}
